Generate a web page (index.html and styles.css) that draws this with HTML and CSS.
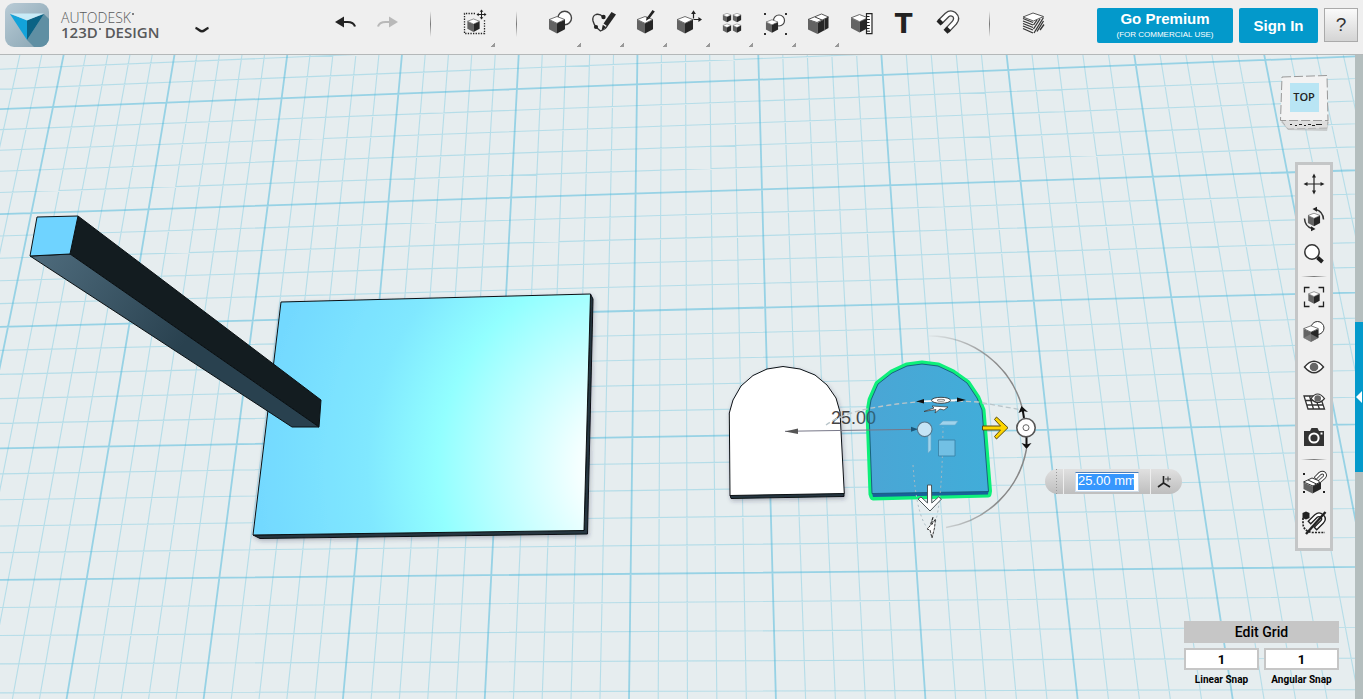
FILE: index.html
```html
<!DOCTYPE html>
<html lang="en">
<head>
<meta charset="utf-8">
<title>Autodesk 123D Design</title>
<link rel="stylesheet" href="styles.css">
</head>
<body>
<svg class="defs" aria-hidden="true">
  <symbol id="cube" viewBox="0 0 18 19">
    <path d="M9 .8 17.3 4 9 8 .7 4z" fill="#fff" stroke="#444" stroke-width=".8"/>
    <path d="M.5 4.3 9 8.2v10.5L.5 14.2z" fill="#636363"/>
    <path d="M17.5 4.3 9 8.2v10.5l8.500-4.500z" fill="#262626"/>
  </symbol>
</svg>

<header class="topbar">
  <div class="brand">
    <svg class="logo" viewBox="0 0 44 44" aria-hidden="true">
      <defs>
        <linearGradient id="lg" x1="0" y1="0" x2="1" y2="1"><stop offset="0" stop-color="#b9cbd6"/><stop offset="1" stop-color="#86a3b1"/></linearGradient>
        <clipPath id="lc"><rect width="44" height="44" rx="9"/></clipPath>
      </defs>
      <g clip-path="url(#lc)">
        <rect width="44" height="44" fill="url(#lg)"/>
        <path d="M39 11 22 37l8 8h15V17z" fill="#5f8fa3"/>
        <path d="M5 11 22 17v20z" fill="#13a3da"/>
        <path d="M39 11 22 17v20z" fill="#0b6385"/>
        <path d="M5 10.500h34L22 17.500z" fill="#c8ebf7"/>
      </g>
    </svg>
    <div class="brand-text">
      <span class="brand-top">AUTODESK<i class="mark"></i></span>
      <span class="brand-name">123D<i class="mark"></i> DESIGN</span>
    </div>
    <button class="plain menu" aria-label="Application menu">
      <svg viewBox="0 0 16 8" width="16" height="8"><path d="M1.500 1.800C4 2.500 6 5.300 8 5.300s4-2.800 6.500-3.500" fill="none" stroke="#222" stroke-width="2.400"/></svg>
    </button>
  </div>

  <nav class="tools" aria-label="Main tools">
    <button class="tool" aria-label="Undo"><svg viewBox="0 0 28 28"><path d="M4 13l9-5.500v11z" fill="#222"/><path d="M12 13h4.500q6 0 7.500 4.500" fill="none" stroke="#222" stroke-width="2.200"/></svg></button>
    <button class="tool" aria-label="Redo" disabled><svg viewBox="0 0 28 28"><path d="M24 13l-9-5.500v11z" fill="#b9b9b9"/><path d="M16 13h-4.500q-6 0-7.500 4.500" fill="none" stroke="#b9b9b9" stroke-width="2.200"/></svg></button>
    <span class="vsep"></span>
    <button class="tool more" aria-label="Transform"><svg viewBox="0 0 28 28"><path d="M15 4.500H4.500v20h20V11" fill="none" stroke="#222" stroke-width="1.300" stroke-dasharray="1.300 1.300"/><use href="#cube" x="7" y="9" width="13" height="14.500"/><path d="M21.500 1.500v8M17.500 5.500h8" stroke="#222"/><path d="M21.500.5l1.800 2.200h-3.600zM21.500 10.500l1.800-2.200h-3.600zM16.500 5.500l2.200-1.800v3.600zM26.500 5.500l-2.200-1.800v3.600z" fill="#222"/></svg></button>
    <span class="vsep"></span>
    <button class="tool more" aria-label="Primitives"><svg viewBox="0 0 28 28"><circle cx="18.700" cy="9" r="6.800" fill="#fff" stroke="#444" stroke-width="1.400"/><use href="#cube" x="2.500" y="6.500" width="17" height="18.500"/></svg></button>
    <button class="tool more" aria-label="Sketch"><svg viewBox="0 0 28 28"><path d="M14 8Q11 4.500 7 5.500 3 7 4 12q1 4 3.500 6.500L11.500 22q6-2 6.500-5" fill="none" stroke="#333" stroke-width="1.300"/><circle cx="14.500" cy="8" r="2.200" fill="#222"/><circle cx="7" cy="18" r="2.100" fill="#222"/><path d="M22.500 3 27 5.500 18.500 17.500 14.500 14.500z" fill="#262626"/><path d="M13.800 15.800l3.500 2.500-4.800 3.500z" fill="#222"/></svg></button>
    <button class="tool more" aria-label="Construct"><svg viewBox="0 0 28 28"><use href="#cube" x="4.500" y="6.500" width="17" height="18.500"/><path d="M20.500 1l2.300 1.500-5.300 7-2-1.500z" fill="#222"/><path d="M14.800 7.600l2.700 2-3.500 2.200z" fill="#222"/></svg></button>
    <button class="tool more" aria-label="Modify"><svg viewBox="0 0 28 28"><use href="#cube" x="1.500" y="6.500" width="17" height="18.500"/><path d="M18.500 9.500V4M18.500 10.500H24" stroke="#222" stroke-width="1.200"/><path d="M18.500 1.300l2.400 3.600h-4.800zM27 10.500l-3.600 2.400V8.100z" fill="#222"/></svg></button>
    <button class="tool more" aria-label="Pattern"><svg viewBox="0 0 28 28"><use href="#cube" x="4.500" y="3.700" width="9" height="10"/><use href="#cube" x="14.500" y="3.700" width="9" height="10"/><use href="#cube" x="4.500" y="14.200" width="9" height="10"/><use href="#cube" x="14.500" y="14.200" width="9" height="10"/></svg></button>
    <button class="tool more" aria-label="Grouping"><svg viewBox="0 0 28 28"><circle cx="18" cy="11.500" r="5.500" fill="#fff" stroke="#444" stroke-width="1.200"/><use href="#cube" x="4.500" y="10" width="13" height="14"/><path d="M3 4h2v2H3zM24 4h2v2h-2zM3 24h2v2H3zM24 24h2v2h-2z" fill="#333"/></svg></button>
    <button class="tool more" aria-label="Combine"><svg viewBox="0 0 28 28"><path d="M4 10.500 17.500 5 24.500 8 13 13.500z" fill="#fff" stroke="#444" stroke-width=".9"/><path d="M11 8l7 3" stroke="#444"/><path d="M4 10.500 13.500 14v11L4 20.500z" fill="#636363"/><path d="M13.500 14 24.500 8v11l-11 6z" fill="#262626"/><path d="M20.500 10.200v11.200" stroke="#777" stroke-width=".8"/></svg></button>
    <button class="tool" aria-label="Measure"><svg viewBox="0 0 28 28"><use href="#cube" x="3.500" y="3.500" width="18" height="21.500"/><path d="M19.500 4.700H25v20h-5.500z" fill="#fff" stroke="#222" stroke-width="1.200"/><path d="M20 7.500h2.500M20 10.500h3M20 13.500h2.500M20 16.500h3M20 19.500h2.500M20 22.200h3" stroke="#222"/></svg></button>
    <button class="tool tee" aria-label="Text">T</button>
    <button class="tool" aria-label="Snap"><svg viewBox="0 0 28 28"><path d="M6.500 13.500 14 6Q17.500 3 21 5.500 25 9 21.500 13.500L14 21.500" fill="none" stroke="#444" stroke-width="6.200"/><path d="M7 13 14 6Q17.500 3 21 5.500 25 9 21.500 13.500L14.500 21" fill="none" stroke="#fff" stroke-width="3.600"/><path d="M6.500 9.500l4 4-3 3-4-4zM14 17.500l4 4-3.500 3.300-4-4z" fill="#222"/></svg></button>
    <span class="vsep"></span>
    <button class="tool" aria-label="Material"><svg viewBox="0 0 28 28"><path d="M4 8 14 4l10.500 3.500L14.500 12z" fill="#fff" stroke="#444" stroke-width=".9"/><path d="M4 9.500l10 4M4 12l10 4M4 14.500l10 4M4 17l10 4M4 19.500l10 4.500" stroke="#333" stroke-width="1.300"/><path d="M14.500 16 18 11M14.500 20 21 10M15 24 24.500 8.500M18 22.500 24.500 12M21 21l4-5.500" stroke="#333" stroke-width="1.300"/></svg></button>
  </nav>

  <div class="account">
    <button class="cta premium"><strong>Go Premium</strong><small>(FOR COMMERCIAL USE)</small></button>
    <button class="cta signin">Sign In</button>
    <button class="help" aria-label="Help">?</button>
  </div>
</header>

<main class="workspace">
  <div class="viewport">
    <svg class="scene" viewBox="0 55 1355 644" preserveAspectRatio="xMidYMid slice" role="img" aria-label="3D work plane with models">
      <defs>
        <radialGradient id="plate" gradientUnits="userSpaceOnUse" cx="648" cy="470" r="390">
          <stop offset=".14" stop-color="#fff"/><stop offset=".54" stop-color="#92ffff"/><stop offset=".72" stop-color="#80e8ff"/><stop offset="1" stop-color="#73d9ff"/>
        </radialGradient>
        <linearGradient id="bar" gradientUnits="userSpaceOnUse" x1="40" y1="255" x2="180" y2="350">
          <stop offset="0" stop-color="#4d6a7b"/><stop offset="1" stop-color="#29414f"/>
        </linearGradient>
        <linearGradient id="tile" x1="0" y1="0" x2="1" y2="0"><stop offset="0" stop-color="#4aa6d5"/><stop offset="1" stop-color="#41add9"/></linearGradient>
        <linearGradient id="fade" gradientUnits="userSpaceOnUse" x1="925" y1="0" x2="1000" y2="0"><stop offset="0" stop-color="#888" stop-opacity="0"/><stop offset="1" stop-color="#888"/></linearGradient>
        <linearGradient id="dim" gradientUnits="userSpaceOnUse" x1="831" y1="0" x2="877" y2="0"><stop offset=".55" stop-color="#444"/><stop offset="1" stop-color="#2a6884"/></linearGradient>
        <filter id="soft" x="-10%" y="-10%" width="120%" height="120%"><feDropShadow dx="1" dy="2" stdDeviation="2" flood-color="#334" flood-opacity=".3"/></filter>
      </defs>
      <path id="minor" class="minor"/>
      <path id="major" class="major"/>

      <g class="edge" stroke-linejoin="round">
        <g filter="url(#soft)">
          <path d="M590.500 294 593 299 587.500 534 260 538.500 253 535 584 530z" fill="#26363f"/>
          <path d="M281 302 590.500 294 584 530.500 253 535z" fill="url(#plate)"/>
        </g>
        <path d="M78 216 321 400 319 427 70 254z" fill="#131c20"/>
        <path d="M30 256 70 254 319 427 292 427z" fill="url(#bar)"/>
        <path d="M37 217 78 216 70 254 30 256z" fill="#6fd3ff"/>

        <g filter="url(#soft)">
          <path d="M730 495 844 493 844 496.500 731 498.500z" fill="#26363f"/>
          <path d="M730 495.500 729.300 413 733 400 741 386 753 375.500 767 369 783 366.500 800 369 815 375 827 385 836 398 840 412 844.300 493.500z" fill="#fff"/>
        </g>
      </g>
      <path d="M873 497 872 494 869 412 871 400 878 384 892 373 907 366 922 364 938 366 953 373 967 383 977 398 982 410 988.500 491 988 494z" fill="#1c6aa0" stroke="#0ef07b" stroke-width="7" stroke-linejoin="round"/>
      <path d="M873 497 872 493 988.500 491 988 494.500z" fill="#17629a"/>
      <path d="M872 493.500 869 412 871 400 878 384 892 373 907 366 922 364 938 366 953 373 967 383 977 398 982 410 988.500 491.500z" fill="url(#tile)" stroke="#16567b" stroke-width=".9"/>

      <text class="dimension" x="831" y="424" fill="url(#dim)">25.00</text>
      <path d="M785 431.300 917 429.300" stroke="#778" stroke-width="1"/>
      <path d="M785 431.500l13-3v5.500z" fill="#555"/><path d="M918 429.300l-7-2.500v5z" fill="#1c5679"/>

      <path d="M929 336A97 97 0 0 1 1022 407M1026.500 449A97 97 0 0 1 946 527.500" fill="none" stroke="url(#fade)" stroke-width="1.500"/>
      <path d="M826 425Q845 411 890 405 930 399 978 402L1022 410" fill="none" stroke="#b9c5ca" stroke-width="1.300" stroke-dasharray="5 3"/>
      <path d="M913 465Q917 523 931 531 942 520 943 427" fill="none" stroke="#a9bac2" stroke-width="1" stroke-dasharray="2 3"/>
      <path d="M923 401.200 958 400" stroke="#fff" stroke-width="1.500"/>
      <path d="M916 401.500l8-2.500v4.500zM966 400l-9-2.500v4.500z" fill="#111"/>
      <ellipse cx="941" cy="400.300" rx="9.500" ry="3" fill="#fff" stroke="#222" stroke-width=".8"/><ellipse cx="941" cy="400.300" rx="4" ry="1" fill="none" stroke="#555" stroke-width=".7"/>
      <path d="M924 411.500l10-3.500-2-2 16 1-4 3-4-1-5 4 1-3.500z" fill="#fff" stroke="#333" stroke-width=".7"/>
      <path d="M943 421h15l-3 4h-16zM928 435l3-1v16l-3 3z" fill="#9fd3ec" stroke="#6aa9c9" stroke-width=".6"/>
      <path d="M938.500 440h16.500v16h-16.500z" fill="#72c0e4" stroke="#3b83a8" stroke-width=".9"/>
      <circle cx="924.700" cy="429.300" r="7.300" fill="#c5e4f5" stroke="#55768a" stroke-width="1.100"/>
      <path d="M982.500 426h18l-6-6.500 2-2.500 11.500 10.700-11.500 11.300-2-2.500 6-6.500h-18z" fill="#fdd500" stroke="#5a4c10" stroke-width="1"/>
      <path d="M927.500 485h4l.3 18 6.700-6 3 2-11.500 12-12-12 3-2 6.500 6z" fill="#fff" stroke="#4c5558" stroke-width="1"/>
      <path d="M933 517l-1.500 8 4-6-1 9-2.500 10-2-8-3-1 3-3z" fill="#fff" stroke="#222" stroke-width=".9" stroke-dasharray="3 1"/>
      <path d="M1024 418 1022.700 410M1026.500 437v8" stroke="#111" stroke-width="2"/>
      <path d="M1021.500 406l6.500 6-5-1-4.500 2zM1026.500 449l-5-6 5 1.500 5-1.500z" fill="#111"/>
      <circle cx="1026" cy="427.700" r="9.200" fill="#fff" stroke="#555" stroke-width="1.600"/><circle cx="1026" cy="427.700" r="3" fill="#fff" stroke="#666"/>
    </svg>

    <form class="value-pill">
      <span class="grip"></span>
      <input class="value" aria-label="Distance" value="25.00 mm">
      <button class="plain axis" type="button" aria-label="Local axes"><svg viewBox="0 0 18 18" width="18" height="18"><path d="M7.500 3v7L2 14M7.500 10l6.500 4" fill="none" stroke="#222" stroke-width="1.600"/><path d="M9 6h6M12 3.500v5" stroke="#444"/></svg></button>
    </form>

    <button class="plain viewcube" aria-label="View: top">
      <svg viewBox="0 0 52 62" width="52" height="62">
        <path d="M2 48l7 8 39 1 2-9z" fill="#aaa" opacity=".5"/>
        <path d="M2 46h47l-1 8-39 1z" fill="#dedede" stroke="#aaa" stroke-width=".8" stroke-dasharray="8 3"/>
        <path d="M3 3 48 1.500 49 46.500H1.500z" fill="#f2f2f2" stroke="#999" stroke-dasharray="9 3"/>
        <path d="M11 9h29v29H11z" fill="#b9e5f4"/>
        <path d="M11 50.500h2m3 1h2m2-1h3m2 1h2m2-1h3m1 1h3m1-1h6" stroke="#222" stroke-width="1.200"/>
        <text class="cube-label" x="25" y="27" text-anchor="middle">TOP</text>
      </svg>
    </button>

    <nav class="navbar" aria-label="Navigation">
      <button class="nav" aria-label="Pan"><svg viewBox="0 0 28 28"><path d="M14 6v16M6 14h16" stroke="#222" stroke-width="1.200"/><path d="M14 3.500l2 4h-4zM14 24.500l2-4h-4zM3.500 14l4-2v4zM24.500 14l-4-2v4z" fill="#222"/></svg></button>
      <button class="nav" aria-label="Orbit"><svg viewBox="0 0 28 28"><use href="#cube" x="7.500" y="7.500" width="13" height="14"/><path d="M16 4.500q7 2 7.500 10M12 23.500q-7-2-7.500-10" fill="none" stroke="#333" stroke-width="1.500"/><path d="M12.500 4l4.500-2.200v5zM15.500 24L11 26.200v-5z" fill="#222"/></svg></button>
      <button class="nav" aria-label="Zoom"><svg viewBox="0 0 28 28"><circle cx="12" cy="12" r="7.200" fill="#fff" stroke="#333" stroke-width="1.500"/><path d="M17.500 17.500l5 4.500" stroke="#222" stroke-width="4"/></svg></button>
      <span class="hsep"></span>
      <button class="nav" aria-label="Fit"><svg viewBox="0 0 28 28"><path d="M4.500 9.500v-5h5M18.500 4.500h5v5M23.500 18.500v5h-5M9.500 23.500h-5v-5" fill="none" stroke="#222" stroke-width="1.300"/><use href="#cube" x="8" y="7.500" width="12" height="14"/></svg></button>
      <button class="nav" aria-label="Shading"><svg viewBox="0 0 28 28"><circle cx="17.500" cy="10" r="6.500" fill="#fff" stroke="#333"/><use href="#cube" x="3" y="7" width="16" height="17"/><path d="M11 16 3.500 20l7.500 4 7.500-4z" fill="#888" opacity=".7"/></svg></button>
      <button class="nav" aria-label="Visibility"><svg viewBox="0 0 28 28"><path d="M4.500 14Q14 2.500 23.500 14 14 25.500 4.500 14z" fill="#fff" stroke="#333" stroke-width="1.400"/><circle cx="14" cy="14" r="4.300" fill="#666"/></svg></button>
      <button class="nav" aria-label="Grid visibility"><svg viewBox="0 0 28 28"><path d="M4 8h16l4.500 13H8zM5.500 12.500h17M7 17h16.500M9.500 8l4 13M14.500 8l5 13" fill="#fff" stroke="#333" stroke-width="1.300"/><path d="M11 10.500q6.500-9 13.500 0-6.500 8-13.500 0z" fill="#fff" stroke="#333" stroke-width="1.200"/><circle cx="17.700" cy="10.500" r="3.300" fill="#666"/></svg></button>
      <button class="nav" aria-label="Screenshot"><svg viewBox="0 0 28 28"><path d="M4 8h6l1.500-3h6L19 8h5v15H4z" fill="#333"/><circle cx="14" cy="15" r="4.600" fill="#333" stroke="#fff" stroke-width="2"/><path d="M20.500 9.500h2v2h-2z" fill="#fff"/></svg></button>
      <span class="hsep"></span>
      <button class="nav tall" aria-label="Snap to objects"><svg viewBox="0 0 28 28"><path d="M3.500 13 12 9l9 3.500-8 4.500z" fill="#fff" stroke="#333"/><path d="M8 11l8.500 4" stroke="#333"/><path d="M3.500 13.500 12.500 17.500v7L3.500 20z" fill="#636363"/><path d="M12.500 17.500 21 13v7l-8.500 4.500z" fill="#262626"/><path d="M15 9.500l5-5q2.500-1.800 4.500 0 1.500 2-.5 4l-5 4.500" fill="none" stroke="#333" stroke-width="3.600"/><path d="M15.500 9l4.500-4.500q2.500-1.800 4.500 0 1.500 2-.5 4L19.500 12.500" fill="none" stroke="#fff" stroke-width="1.800"/><path d="M3 4h2v2H3zM3 22h2v2H3zM23 22h2v2h-2z" fill="#222"/></svg></button>
      <button class="nav tall" aria-label="Snap off"><svg viewBox="0 0 28 28"><path d="M3 9v5q0 8 9 9.500h13" fill="none" stroke="#222" stroke-width="1.700" stroke-dasharray="2 1.200"/><path d="M2.500 4l3.500-1.500L9.500 4v5L6 10.500 2.500 9z" fill="#222"/><path d="M9 14l7-7q3-2.500 6 0 3 3 0 6l-7 7" fill="none" stroke="#222" stroke-width="4.800"/><path d="M10 13l6-6q3-2.500 6 0 3 3 0 6l-6 6" fill="none" stroke="#fff" stroke-width="2.200"/><path d="M6 25 25.500 3" stroke="#222" stroke-width="2.400"/></svg></button>
    </nav>

    <section class="snap">
      <button class="edit-grid">Edit Grid</button>
      <label class="field"><input value="1"><span>Linear Snap</span></label>
      <label class="field"><input value="1"><span>Angular Snap</span></label>
    </section>
  </div>
  <aside class="drawer"><button class="drawer-handle" aria-label="Open parts bin"></button></aside>
</main>
<script src="grid.js"></script>
</body>
</html>
```
FILE: styles.css
```css
* { box-sizing: border-box; }
body {
  margin: 0;
  padding-right: 2px;
  min-height: 100vh;
  display: flex;
  flex-direction: column;
  overflow: hidden;
  background: #fff;
  font-family: "Liberation Sans", Arial, sans-serif;
}
button, input { font: inherit; margin: 0; }
button { cursor: pointer; }
.defs { position: absolute; width: 0; height: 0; }
.plain { border: 0; padding: 0; background: none; }

.topbar {
  display: flex;
  height: 55px;
  background: #efefef;
  border-bottom: 1px solid #b4b8b9;
}
.brand { display: flex; flex: 0 0 323px; padding: 3px 0 0 5px; align-items: flex-start; }
.logo { width: 44px; height: 44px; }
.brand-text {
  display: flex;
  flex-direction: column;
  width: 98px;
  margin: 7px 35px 0 12px;
  color: #58595b;
  font-family: "Open Sans", "Noto Sans", sans-serif;
  line-height: 15px;
  white-space: nowrap;
}
.brand-top { font-size: 14px; font-weight: 300; }
.brand-name { font-size: 15px; font-weight: 600; }
.mark { display: inline-block; width: 2px; height: 2px; margin-left: 1px; border-radius: 1px; background: #58595b; vertical-align: 8px; }
.menu { margin-top: 17px; height: 14px; }

.tools { display: flex; height: 54px; }
.tool, .vsep { width: 43px; flex: none; }
.tool { position: relative; border: 0; background: none; padding: 0 0 8px; display: grid; place-items: center; }
.tool svg, .nav svg { width: 28px; height: 28px; display: block; }
.more::after {
  content: "";
  position: absolute;
  right: 0;
  top: 43px;
  width: 4px;
  height: 4px;
  background: linear-gradient(135deg, transparent 45%, #999 50%);
}
.vsep {
  height: 26px;
  margin-top: 11px;
  background: linear-gradient(transparent, #777, transparent) center / 1px 100% no-repeat;
}
.tee { font: bold 26px/30px "DejaVu Sans", sans-serif; color: #222; padding-bottom: 6px; }

.account { display: flex; gap: 6px; margin-left: auto; padding: 8px 5px 0 0; height: 43px; }
.cta { border: 0; border-radius: 2px; background: #0399cb; color: #fff; padding: 0; font-weight: bold; font-size: 15px; }
.premium { width: 136px; display: flex; flex-direction: column; align-items: center; justify-content: center; padding-bottom: 1px; }
.premium strong { line-height: 19px; }
.premium small { font-size: 8px; font-weight: normal; line-height: 13px; }
.signin { width: 79px; }
.help { width: 34px; height: 34px; padding: 0; border: 1px solid #aaa; background: linear-gradient(#fafafa, #d4d4d4); color: #333; font-size: 19px; }

.workspace { display: flex; flex: 1; min-height: 0; }
.viewport { position: relative; flex: 1; overflow: hidden; background: #e6edef; }
.scene { position: absolute; inset: 0; width: 100%; height: 100%; }
.minor { fill: none; stroke: #59bfdd; stroke-opacity: .34; stroke-width: 1.1; }
.major { fill: none; stroke: #48b8dc; stroke-opacity: .5; stroke-width: 1.8; }
.edge { stroke: #0b1114; stroke-width: 1; }
.dimension { font: 18px "Liberation Sans", Arial, sans-serif; }

.value-pill {
  position: absolute;
  left: 1045px;
  top: 414px;
  width: 137px;
  height: 25px;
  display: flex;
  align-items: center;
  border-radius: 13px;
  background: linear-gradient(#e0e0e0, #bebebe);
}
.grip { width: 19px; height: 25px; margin-right: 11px; border-right: 1px solid #eee; background: repeating-linear-gradient(#999 0 1px, transparent 1px 3px) 11px 0 / 1px 100% no-repeat; }
.value {
  width: 64px;
  height: 20px;
  padding: 0 2px 2px;
  border: 1px solid #cfdce8;
  border-top-color: #4a7ebb;
  color: #fff;
  font-size: 13px;
  line-height: 16px;
  background: linear-gradient(#3797fd, #3797fd) 2px 1px / 56px 16px no-repeat #fff;
}
.axis { width: 42px; height: 25px; margin-left: auto; display: flex; align-items: center; padding-left: 14px; }
.axis::before { content: ""; height: 25px; border-left: 1px solid #eee; margin: 0 5px 0 -4px; }

.viewcube { position: absolute; right: 24px; top: 19px; height: 62px; }
.viewcube svg { display: block; }
.cube-label { font: 600 11px "Open Sans", sans-serif; fill: #222; }

.navbar {
  position: absolute;
  right: 22px;
  top: 107px;
  width: 38px;
  padding: 2px 0 5px;
  border: 3px solid #c4c6c7;
  background: #efefef;
  display: flex;
  flex-direction: column;
  align-items: center;
}
.nav { width: 32px; height: 35px; padding: 0 0 1px; border: 0; background: none; display: grid; place-items: center; }
.nav.tall { height: 40px; }
.hsep { width: 26px; height: 8px; background: linear-gradient(90deg, transparent, #777, transparent) center / 100% 1px no-repeat; }

.snap {
  position: absolute;
  right: 16px;
  bottom: 13px;
  width: 155px;
  display: grid;
  grid-template-columns: 1fr 1fr;
  gap: 5px;
  font-family: Roboto, sans-serif;
}
.edit-grid { grid-column: 1 / -1; height: 22px; padding: 0; border: 0; background: #c6c6c6; color: #000; font-size: 14px; font-weight: 500; }
.field { display: flex; flex-direction: column; align-items: center; font-size: 10px; font-weight: 700; line-height: 12px; gap: 4px; white-space: nowrap; }
.field input { width: 100%; height: 22px; border: 2px solid #c6c6c6; background: #fff; text-align: center; font-size: 13px; padding: 0; }

.drawer { flex: 0 0 8px; background: #b4bebe; display: flex; flex-direction: column; }
.drawer-handle { height: 150px; margin-top: 267px; width: 8px; padding: 0; border: 0; background: #0399cb; display: grid; place-items: center; }
.drawer-handle::before { content: ""; border: solid transparent; border-width: 6px 6px 6px 0; border-right-color: #fff; }
```
FILE: grid.js
```javascript
// Projects the work plane grid through a perspective mapping.
// The four corners are the screen positions of plane points (1,0) (9,0) (9,4) (1,4).
const corners = [[166.5, 102.7], [1135.8, 65], [1212.7, 568.3], [86.7, 579]];
const [[x0, y0], [x1, y1], [x2, y2], [x3, y3]] = corners;
const sx = x0 - x1 + x2 - x3, sy = y0 - y1 + y2 - y3;
const dx1 = x1 - x2, dx2 = x3 - x2, dy1 = y1 - y2, dy2 = y3 - y2;
const det = dx1 * dy2 - dx2 * dy1;
const g = (sx * dy2 - dx2 * sy) / det;
const h = (dx1 * sy - sx * dy1) / det;

function project(u, v) {
  const s = (u - 1) / 8, t = v / 4, w = g * s + h * t + 1;
  const x = ((x1 - x0 + g * x1) * s + (x3 - x0 + h * x3) * t + x0) / w;
  const y = ((y1 - y0 + g * y1) * s + (y3 - y0 + h * y3) * t + y0) / w;
  return x.toFixed(1) + " " + y.toFixed(1);
}

const paths = { minor: "", major: "" };
function line(index, from, to) {
  paths[index % 5 === 0 ? "major" : "minor"] += "M" + from + "L" + to;
}
for (let i = -15; i <= 65; i++) line(i, project(i / 5, -0.8), project(i / 5, 6));
for (let j = -4; j <= 30; j++) line(j, project(-3, j / 5), project(13, j / 5));
for (const name in paths) document.getElementById(name).setAttribute("d", paths[name]);
```
